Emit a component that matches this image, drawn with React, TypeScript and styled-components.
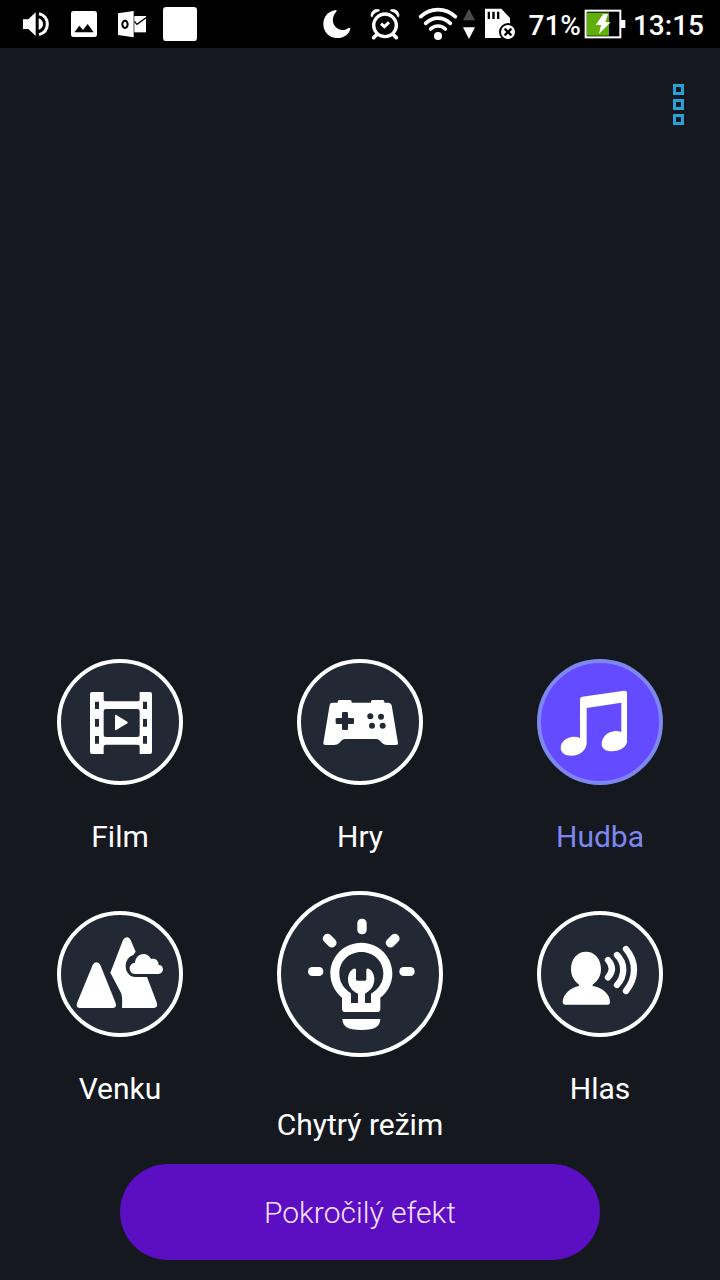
import React, { useState } from "react";
import styled, { createGlobalStyle } from "styled-components";

const colors = {
  page: "#15181f",
  dial: "#232934",
  white: "#ffffff",
  active: "#644bff",
  activeRing: "#7d87f0",
  accent: "#2b9fd6",
  action: "#5b0ec2",
  actionText: "#f8e2ff",
  charge: "#5fb00a",
};

const GlobalStyle = createGlobalStyle`
  * { box-sizing: border-box; }
  body {
    margin: 0;
    background: ${colors.page};
    color: ${colors.white};
    font-family: Roboto, "Noto Sans", sans-serif;
  }
  button { font: inherit; color: inherit; border: 0; padding: 0; background: none; cursor: pointer; }
  svg { display: block; }
`;

const Screen = styled.div`
  min-height: 100vh;
  display: flex;
  flex-direction: column;
`;

const StatusBar = styled.header`
  height: 48px;
  background: #000;
  display: flex;
  justify-content: space-between;
  padding: 0 16px 0 12px;
`;

const StatusGroup = styled.div`
  display: flex;
  align-items: center;
`;

const StatusIcon = styled.svg<{ $width?: number }>`
  width: ${(p) => p.$width ?? 48}px;
  height: 48px;
  flex: none;
`;

const StatusText = styled.span<{ $gap: number }>`
  font-size: 28px;
  font-weight: 500;
  line-height: 32px;
  margin: 4px 0 0 ${(p) => p.$gap}px;
`;

const Toolbar = styled.div`
  display: flex;
  justify-content: flex-end;
  padding: 28px 24px 0;
`;

const MenuButton = styled.button`
  width: 36px;
  height: 56px;
  display: flex;
  flex-direction: column;
  align-items: center;
  justify-content: center;
  gap: 4px;
`;

const MenuDot = styled.span`
  width: 11px;
  height: 11px;
  border: 3px solid ${colors.accent};
`;

const Modes = styled.main`
  margin-top: auto;
  display: grid;
  grid-template-columns: repeat(3, 1fr);
  row-gap: 36px;
  align-items: start;
`;

const ModeButton = styled.button<{ $active: boolean }>`
  display: flex;
  flex-direction: column;
  align-items: center;
  color: ${(p) => (p.$active ? colors.activeRing : colors.white)};
`;

const DialSlot = styled.span`
  height: 166px;
  display: flex;
  align-items: center;
`;

const Dial = styled.span<{ $large?: boolean; $active: boolean }>`
  width: ${(p) => (p.$large ? 166 : 126)}px;
  height: ${(p) => (p.$large ? 166 : 126)}px;
  border: 4px solid ${(p) => (p.$active ? colors.activeRing : colors.white)};
  border-radius: 50%;
  background: ${(p) => (p.$active ? colors.active : colors.dial)};
  color: ${colors.white};
  --dial: ${(p) => (p.$active ? colors.active : colors.dial)};

  svg { width: 100%; height: 100%; }
`;

const ModeLabel = styled.span<{ $large?: boolean }>`
  margin-top: ${(p) => (p.$large ? 50 : 14)}px;
  font-size: 30px;
  line-height: 36px;
  white-space: nowrap;
`;

const Footer = styled.footer`
  display: flex;
  justify-content: center;
  padding: 21px 24px 20px;
`;

const ActionButton = styled.button`
  width: 100%;
  max-width: 480px;
  height: 96px;
  border-radius: 48px;
  background: ${colors.action};
  color: ${colors.actionText};
  font-size: 30px;
  font-weight: 300;
  line-height: 36px;
  padding-top: 2px;
`;

const FilmIcon = () => (
  <svg viewBox="63 54 354 354" fill="currentColor" aria-hidden="true">
    <path
      fillRule="evenodd"
      d="M156 141H191V164Q192 169 197 169H293Q298 169 299 164V141H330Q336 141 336 147V321Q336 327 330 327H299V304Q298 299 293 299H197Q192 299 191 304V327H156Q150 327 150 321V147Q150 141 156 141ZM165 170V192H177V170ZM165 222V245H177V222ZM165 273V296H177V273ZM309 170V192H321V170ZM309 222V245H321V222ZM309 273V296H321V273ZM198 192Q191 192 191 199V269Q191 276 198 276H292Q299 276 299 269V199Q299 192 292 192Z"
    />
    <path d="M225 212Q225 208 229 210L262 230Q265 232 262 235L229 255Q225 257 225 253Z" />
  </svg>
);

const GamepadIcon = () => (
  <svg viewBox="63 54 354 354" fill="currentColor" aria-hidden="true">
    <path d="M149 180Q150 173 157 173H173V170Q173 165 178 165H210Q215 165 215 170V173H273V170Q273 165 278 165H308Q313 165 313 170V173H325Q333 173 335 181L354 294Q355 300 348 300H322Q312 300 306 294L300 287Q296 282 289 282H195Q188 282 184 287L178 294Q172 300 162 300H136Q129 300 130 294Z" />
    <g fill="var(--dial)">
      <rect x="186" y="201" width="18" height="54" rx="4" />
      <rect x="167" y="219" width="55" height="18" rx="4" />
      <circle cx="271" cy="214" r="9" />
      <circle cx="303" cy="215" r="9" />
      <circle cx="276" cy="242" r="9" />
      <circle cx="308" cy="242" r="9" />
    </g>
  </svg>
);

const MusicIcon = () => (
  <svg viewBox="63 54 354 354" fill="currentColor" aria-hidden="true">
    <path
      fillRule="evenodd"
      d="M180 163Q180 156 187 155L312 137Q321 136 321 144V289C321 305 300 319 276 319C256 319 245 310 245 297C245 277 263 259 286 258Q297 257 304 262V173L200 189V293C200 314 180 332 154 332C134 332 122 322 122 308C122 290 140 275 162 275Q174 275 180 279Z"
    />
  </svg>
);

const OutdoorIcon = () => (
  <svg viewBox="63 60 354 354" fill="currentColor" aria-hidden="true">
    <path d="M158 210Q162 202 169 202Q177 202 181 210L226 322Q232 339 219 339H119Q106 339 112 322Z" />
    <path d="M211 233L249 135Q253 127 261 127Q269 127 272 135L287 170L280 180C266 184 257 198 257 213C257 232 270 246 286 246H321L350 322Q355 339 341 339H246C247 316 247 302 242 292Z" />
    <path d="M284 237C275 237 269 229 269 220C269 211 276 204 285 203C286 188 297 177 310 177C321 177 329 183 333 192C346 188 356 197 356 210C365 210 369 216 369 223C369 231 363 237 355 237Z" />
  </svg>
);

const BulbIcon = () => (
  <svg viewBox="48 45 474 474" fill="currentColor" aria-hidden="true">
    <rect x="277" y="116" width="28" height="47" rx="13" />
    <rect x="129" y="261" width="46" height="27" rx="13" />
    <rect x="403" y="261" width="46" height="27" rx="13" />
    <rect x="171" y="168" width="46" height="28" rx="13" transform="rotate(45 194 182)" />
    <rect x="360" y="168" width="46" height="28" rx="13" transform="rotate(-45 383 182)" />
    <path
      fillRule="evenodd"
      d="M289 188C341 188 382 230 382 280C382 311 368 337 346 353V386Q346 396 336 396H241Q231 396 231 386V353C211 337 196 311 196 280C196 230 237 188 289 188ZM289 216C252 216 223 244 223 280C223 306 236 326 258 340V369H279V341C259 332 249 316 249 297C249 284 255 271 266 266Q271 264 273 269V298Q273 302 277 302H300Q304 302 304 298V269Q305 265 311 266C322 271 328 284 328 297C328 316 319 331 300 341V369H318V341C342 327 355 307 355 280C355 244 326 216 289 216Z"
    />
    <path d="M232 417H346C344 440 332 450 289 450C246 450 234 440 232 417Z" />
  </svg>
);

const VoiceIcon = () => (
  <svg viewBox="63 60 354 354" fill="currentColor" aria-hidden="true">
    <path d="M198 170C225 170 243 193 243 222C243 241 235 257 218 269V273C247 278 269 296 270 320Q270 329 263 329H136Q128 329 128 320C130 296 152 278 177 273V269C161 257 153 241 153 222C153 193 171 170 198 170Z" />
    <g fill="none" stroke="currentColor" strokeWidth="19" strokeLinecap="round">
      <path d="M264 195Q287 221 264 247" />
      <path d="M291 180C316 205 316 242 291 270" />
      <path d="M318 162C350 200 350 247 318 288" />
    </g>
  </svg>
);

const modes = [
  { id: "film", label: "Film", Icon: FilmIcon },
  { id: "games", label: "Hry", Icon: GamepadIcon },
  { id: "music", label: "Hudba", Icon: MusicIcon },
  { id: "outdoor", label: "Venku", Icon: OutdoorIcon },
  { id: "smart", label: "Chytrý režim", Icon: BulbIcon, large: true },
  { id: "voice", label: "Hlas", Icon: VoiceIcon },
];

const NotificationIcons = () => (
  <StatusGroup>
    <StatusIcon viewBox="36 0 144 144" fill="#fff" aria-label="Volume">
      <path d="M69 58H85L107 37V108L85 87H69ZM116 55C125 59 129 65 129 72C129 80 125 86 116 90Z" />
      <path d="M117 41C132 44 142 56 142 72C142 88 132 100 117 104" fill="none" stroke="#fff" strokeWidth="9" />
    </StatusIcon>
    <StatusIcon viewBox="180 0 144 144" aria-label="Picture">
      <rect x="213" y="33" width="78" height="78" rx="8" fill="#fff" />
      <path d="M223 97L238 77L249 90L263 72L281 97Z" fill="#000" />
    </StatusIcon>
    <StatusIcon viewBox="324 0 144 144" aria-label="Mail">
      <rect x="403" y="48" width="35" height="49" fill="#fff" />
      <path d="M403 64L411 73L438 53" fill="none" stroke="#000" strokeWidth="4" />
      <path d="M354 40L401 33V112L354 105Z" fill="#fff" />
      <ellipse cx="375" cy="73" rx="8" ry="11" fill="none" stroke="#000" strokeWidth="6" />
    </StatusIcon>
    <StatusIcon viewBox="468 0 144 144" aria-label="Notification">
      <rect x="489" y="21" width="102" height="102" rx="10" fill="#fff" />
    </StatusIcon>
  </StatusGroup>
);

const SystemIcons = () => (
  <StatusGroup>
    <StatusIcon viewBox="39 0 144 144" aria-label="Do not disturb">
      <path d="M109 30C86 32 70 49 70 72C70 96 88 114 111 114C132 114 148 102 151 86C148 81 145 84 142 86C132 93 116 91 107 81C96 69 96 51 106 39Q112 31 109 30Z" fill="#fff" />
    </StatusIcon>
    <StatusIcon viewBox="183 0 144 144" fill="none" stroke="#fff" aria-label="Alarm">
      <circle cx="255" cy="76" r="34" strokeWidth="10" />
      <path d="M243 71L253 80L267 67" strokeWidth="9" />
      <path d="M229 105L221 113M281 105L289 113" strokeWidth="11" strokeLinecap="round" />
      <path d="M213 49C212 33 225 25 239 30L237 33C227 36 220 41 216 51ZM297 49C298 33 285 25 271 30L273 33C283 36 290 41 294 51Z" fill="#fff" strokeWidth="2" />
    </StatusIcon>
    <StatusIcon $width={52} viewBox="327 0 156 144" fill="none" stroke="#fff" strokeWidth="11" strokeLinecap="round" aria-label="Wi-Fi">
      <path d="M362 50C392 22 436 22 466 50M377 70C398 49 430 49 451 70M392 87C404 75 424 75 436 87" />
      <circle cx="414" cy="108" r="12" fill="#fff" stroke="none" />
    </StatusIcon>
    <StatusIcon $width={20} viewBox="483 0 60 144" aria-label="Data">
      <path d="M507 26L525 61H489Z" fill="#4b4b4b" />
      <path d="M489 82H525L507 117Z" fill="#fff" />
    </StatusIcon>
    <StatusIcon $width={36} viewBox="543 0 108 144" aria-label="SD card">
      <path d="M555 26H604L630 54V114H555Z" fill="#fff" />
      <path d="M563 35H570V57H563ZM577 35H584V57H577ZM591 35H598V57H591Z" fill="#000" />
      <circle cx="624" cy="96" r="27" fill="#000" />
      <circle cx="624" cy="96" r="21" fill="#fff" />
      <path d="M616 88L632 104M632 88L616 104" stroke="#000" strokeWidth="7" strokeLinecap="round" />
    </StatusIcon>
    <StatusText $gap={12}>71%</StatusText>
    <StatusIcon $width={48} viewBox="243 0 144 144" aria-label="Charging">
      <rect x="257" y="32" width="104" height="80" fill="#000" stroke="#fff" strokeWidth="6" />
      <path d="M362 60H376V84H362Z" fill="#fff" />
      <rect x="261" y="38" width="66" height="69" fill={colors.charge} />
      <path d="M310 42L287 75H303L297 102L332 67H316L324 42Z" fill="#fff" />
    </StatusIcon>
    <StatusText $gap={4}>13:15</StatusText>
  </StatusGroup>
);

export default function App() {
  const [selected, setSelected] = useState("music");

  return (
    <Screen>
      <GlobalStyle />
      <StatusBar>
        <NotificationIcons />
        <SystemIcons />
      </StatusBar>
      <Toolbar>
        <MenuButton type="button" aria-label="Menu">
          <MenuDot />
          <MenuDot />
          <MenuDot />
        </MenuButton>
      </Toolbar>
      <Modes>
        {modes.map(({ id, label, Icon, large }) => (
          <ModeButton
            key={id}
            type="button"
            $active={selected === id}
            aria-pressed={selected === id}
            onClick={() => setSelected(id)}
          >
            <DialSlot>
              <Dial $large={large} $active={selected === id}>
                <Icon />
              </Dial>
            </DialSlot>
            <ModeLabel $large={large}>{label}</ModeLabel>
          </ModeButton>
        ))}
      </Modes>
      <Footer>
        <ActionButton type="button">Pokročilý efekt</ActionButton>
      </Footer>
    </Screen>
  );
}
